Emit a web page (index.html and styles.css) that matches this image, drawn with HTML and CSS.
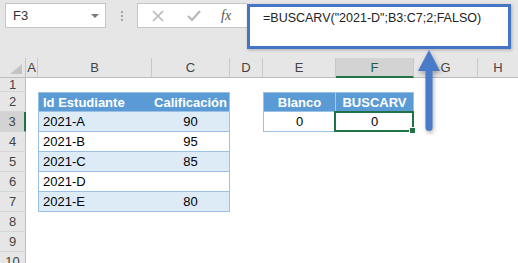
FILE: index.html
```html
<!DOCTYPE html>
<html lang="es">
<head>
  <meta charset="UTF-8" />
  <title>BUSCARV - Blanco</title>
  <link rel="stylesheet" href="styles.css">
</head>
<body>
  <div class="app">
    <div class="toolbar">
      <div class="namebox">
        <span>F3</span>
        <span class="caret"></span>
      </div>
      <div class="grip"><i></i><i></i><i></i></div>
      <div class="fx-buttons">
        <svg class="ico" width="14" height="14" viewBox="0 0 14 14"><path d="M2 2 L12 12 M12 2 L2 12" stroke="#b8b8b8" stroke-width="1.6" fill="none"/></svg>
        <svg class="ico" width="16" height="14" viewBox="0 0 16 14"><path d="M2 7 L6 11 L14 2" stroke="#b8b8b8" stroke-width="2.2" fill="none"/></svg>
        <span class="fx">fx</span>
      </div>
      <div class="formula">=BUSCARV("2021-D";B3:C7;2;FALSO)</div>
    </div>

    <div class="sheet">
      <!-- column headers -->
      <div class="corner"><span class="tri"></span></div>
      <div class="ch">A</div>
      <div class="ch">B</div>
      <div class="ch">C</div>
      <div class="ch">D</div>
      <div class="ch">E</div>
      <div class="ch sel">F</div>
      <div class="ch">G</div>
      <div class="ch last">H</div>

      <!-- row 1 -->
      <div class="rh">1</div>
      <div></div><div></div><div></div><div></div><div></div><div></div><div></div><div></div>

      <!-- row 2 -->
      <div class="rh">2</div>
      <div></div>
      <div class="th left first">Id Estudiante</div>
      <div class="th right">Calificación</div>
      <div></div>
      <div class="th left mid">Blanco</div>
      <div class="th right mid">BUSCARV</div>
      <div></div><div></div>

      <!-- row 3 -->
      <div class="rh sel">3</div>
      <div></div>
      <div class="td left band">2021-A</div>
      <div class="td right band num">90</div>
      <div></div>
      <div class="td left right num">0</div>
      <div class="td right num active">0</div>
      <div></div><div></div>

      <!-- row 4 -->
      <div class="rh">4</div>
      <div></div>
      <div class="td left">2021-B</div>
      <div class="td right num">95</div>
      <div></div><div></div><div></div><div></div><div></div>

      <!-- row 5 -->
      <div class="rh">5</div>
      <div></div>
      <div class="td left band">2021-C</div>
      <div class="td right band num">85</div>
      <div></div><div></div><div></div><div></div><div></div>

      <!-- row 6 -->
      <div class="rh">6</div>
      <div></div>
      <div class="td left">2021-D</div>
      <div class="td right num"></div>
      <div></div><div></div><div></div><div></div><div></div>

      <!-- row 7 -->
      <div class="rh">7</div>
      <div></div>
      <div class="td left band">2021-E</div>
      <div class="td right band num">80</div>
      <div></div><div></div><div></div><div></div><div></div>

      <div class="rh">8</div>
      <div></div><div></div><div></div><div></div><div></div><div></div><div></div><div></div>
      <div class="rh">9</div>
      <div></div><div></div><div></div><div></div><div></div><div></div><div></div><div></div>
      <div class="rh">10</div>
      <div></div><div></div><div></div><div></div><div></div><div></div><div></div><div></div>
    </div>

    <!-- callout arrow pointing at the formula -->
    <svg class="arrow" width="26" height="86" viewBox="0 0 26 86">
      <path d="M12 1 L1 22 L23 22 Z" fill="#4a7bc9"/>
      <rect x="8.5" y="20" width="7" height="62" rx="3.5" fill="#4a7bc9"/>
    </svg>
  </div>
</body>
</html>
```

FILE: styles.css
```css
body {
  margin: 0;
  font-family: "Liberation Sans", Arial, sans-serif;
  background: #fff;
  color: #000;
}
.app {
  position: relative;
  width: 518px;
  height: 263px;
  overflow: hidden;
}
.toolbar {
  height: 58px;
  background: #e6e6e6;
  display: flex;
  align-items: flex-start;
  padding: 3px 0 0 5px;
  box-sizing: border-box;
}
.namebox {
  width: 101px;
  height: 25px;
  box-sizing: border-box;
  background: #fff;
  border: 1px solid #c6c6c6;
  display: flex;
  align-items: center;
  justify-content: space-between;
  padding: 0 6px 0 7px;
  font-size: 13px;
  color: #333;
}
.caret {
  width: 0;
  height: 0;
  border-left: 4px solid transparent;
  border-right: 4px solid transparent;
  border-top: 4px solid #7a7a7a;
}
.grip {
  width: 31px;
  height: 25px;
  display: flex;
  flex-direction: column;
  align-items: center;
  justify-content: center;
  gap: 2px;
}
.grip i {
  display: block;
  width: 2px;
  height: 2px;
  background: #a8a8a8;
}
.fx-buttons {
  width: 110px;
  height: 25px;
  box-sizing: border-box;
  background: #fff;
  border: 1px solid #c6c6c6;
  border-right: none;
  display: flex;
  align-items: center;
  padding-left: 13px;
  gap: 21px;
}
.fx {
  font-family: "Liberation Serif", serif;
  font-style: italic;
  font-size: 14px;
  color: #555;
  margin-left: -2px;
}
.formula {
  margin-top: 1px;
  width: 264px;
  height: 45px;
  box-sizing: border-box;
  background: #fff;
  border: 3px solid #4775c6;
  box-shadow: 1px 1px 3px rgba(0,0,0,0.25);
  padding: 4px 0 0 13px;
  font-size: 12.5px;
  color: #222;
}
.sheet {
  display: grid;
  grid-template-columns: 26px 12px 114px 78px 33px 73px 78px 64px 1fr;
  grid-template-rows: 20px 14px repeat(9, 20px);
  font-size: 13px;
}
.sheet > div {
  box-sizing: border-box;
}
.corner {
  background: #e6e6e6;
  border-right: 1px solid #c6c6c6;
  border-bottom: 1px solid #bdbdbd;
  position: relative;
}
.tri {
  position: absolute;
  right: 3px;
  bottom: 3px;
  width: 0;
  height: 0;
  border-left: 12px solid transparent;
  border-bottom: 10px solid #c4c4c4;
}
.ch {
  background: #e6e6e6;
  border-right: 1px solid #c9c9c9;
  border-bottom: 1px solid #bdbdbd;
  color: #444;
  display: flex;
  align-items: center;
  justify-content: center;
}
.ch.last {
  border-right: none;
}
.ch.sel {
  background: #d3d3d3;
  border-bottom: 2px solid #217346;
  color: #1f5e3a;
}
.rh {
  background: #e6e6e6;
  border-right: 1px solid #bdbdbd;
  border-bottom: 1px solid #d6d6d6;
  color: #444;
  display: flex;
  align-items: center;
  justify-content: center;
}
.rh.sel {
  background: #d3d3d3;
  border-right: 2px solid #217346;
}
.th {
  background: #5b9bd5;
  color: #fff;
  font-weight: bold;
  border-top: 1px solid #9bc2e6;
  border-bottom: 1px solid #9bc2e6;
  display: flex;
  align-items: center;
  justify-content: center;
}
.th.first {
  justify-content: flex-start;
  padding-left: 4px;
}
.th.left { border-left: 1px solid #9bc2e6; }
.th.right { border-right: 1px solid #9bc2e6; }
.th.mid.left { border-right: 1px solid #a9c9ea; }
.th.mid.right { border-left: none; }
.td {
  border-bottom: 1px solid #9bc2e6;
  display: flex;
  align-items: center;
  padding-left: 4px;
}
.td.left { border-left: 1px solid #9bc2e6; }
.td.right { border-right: 1px solid #9bc2e6; }
.td.band { background: #ddebf7; }
.td.num {
  justify-content: center;
  padding-left: 0;
}
.td.active {
  position: relative;
}
.td.active::after {
  content: "";
  position: absolute;
  left: -2px;
  top: -1px;
  right: -1px;
  bottom: -1px;
  border: 2px solid #217346;
}
.td.active::before {
  content: "";
  position: absolute;
  right: -3px;
  bottom: -3px;
  width: 5px;
  height: 5px;
  background: #217346;
  border: 1px solid #fff;
  z-index: 1;
}
.arrow {
  position: absolute;
  left: 417px;
  top: 49px;
  filter: drop-shadow(1px 2px 2px rgba(0,0,0,0.3));
}
```
